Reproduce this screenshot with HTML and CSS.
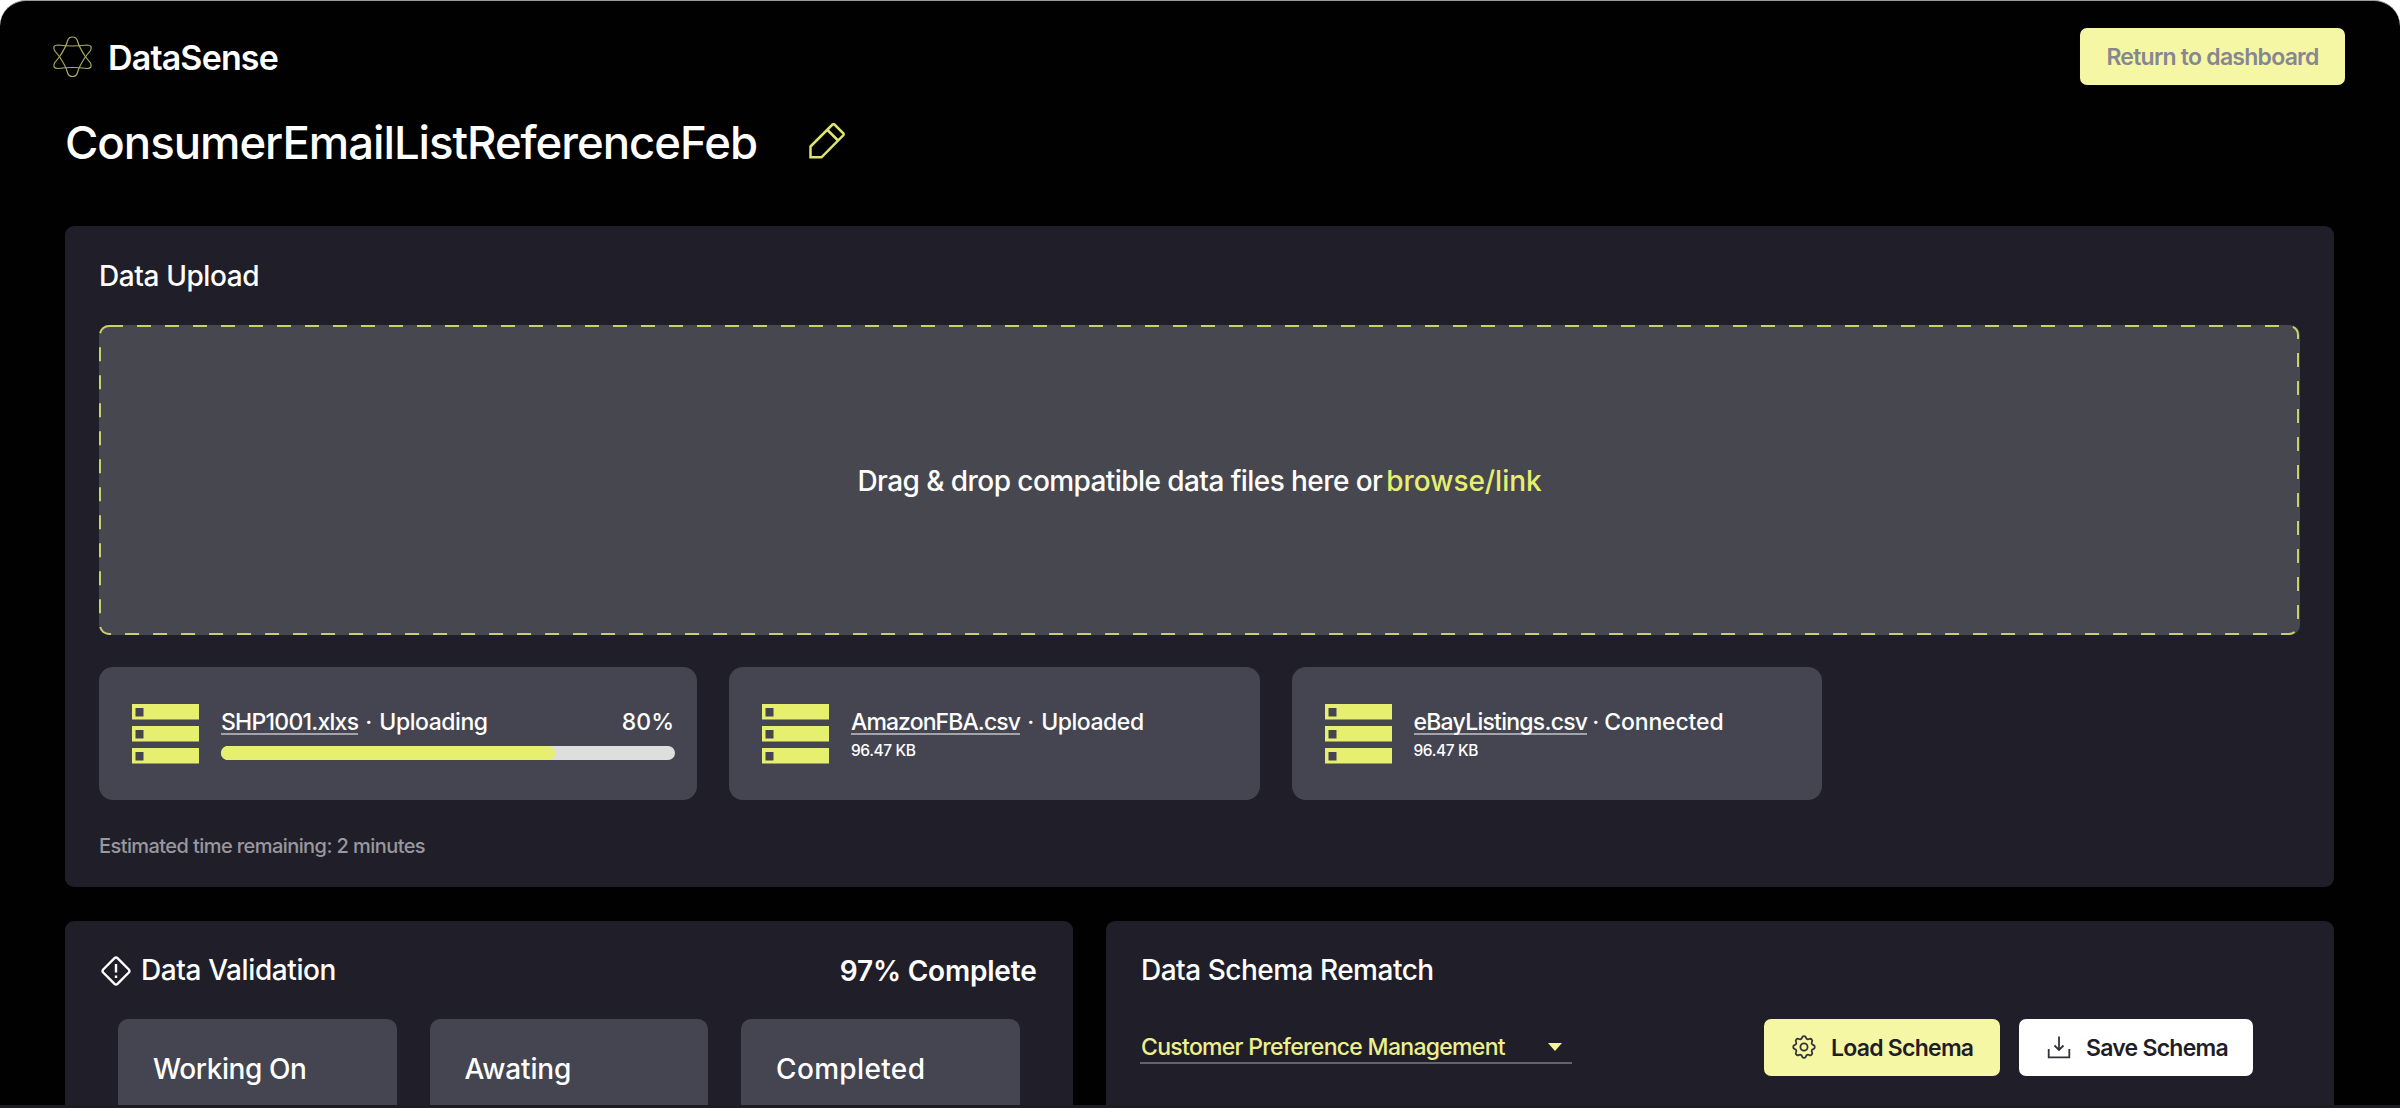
FILE: index.html
```html
<!DOCTYPE html>
<html lang="en">
<head>
    <meta charset="UTF-8">
    <meta name="viewport" content="width=device-width, initial-scale=1.0">
    <title>DataSense</title>
    <link rel="stylesheet" href="styles.css">
</head>
<body>
    <div class="app">
        <header class="topbar">
            <div class="brand">
                <svg class="logo" viewBox="0 0 43 42">
                    <path d="M16.500 5 Q17.500 1 21.500 1 Q25.500 1 26.500 5 Q28 11 34.500 20.750 L39.500 27 Q42 32.500 36 32.500 Q21.500 30.500 7 32.500 Q1 32.500 3.500 27 L8.500 20.750 Q15 11 16.500 5 Z"/>
                    <path d="M16.500 36.500 Q17.500 40.500 21.500 40.500 Q25.500 40.500 26.500 36.500 Q28 30.500 34.500 20.750 L39.500 14.500 Q42 9 36 9 Q21.500 11 7 9 Q1 9 3.500 14.500 L8.500 20.750 Q15 30.500 16.500 36.500 Z"/>
                </svg>
                <span class="brand-name">DataSense</span>
            </div>
            <button class="btn btn-return">Return to dashboard</button>
        </header>

        <div class="title-row">
            <h1>ConsumerEmailListReferenceFeb</h1>
            <svg class="pencil" viewBox="0 0 36 36">
                <path d="M1.500 23.500 L23.500 1.500 Q24.500 .8 25.500 1.500 L34.300 10.300 Q35 11.300 34.300 12.300 L12.500 34.300 H1.500 Z M18.500 7 L29 17.500"/>
            </svg>
        </div>

        <main>
            <section class="panel upload">
                <h2>Data Upload</h2>
                <div class="dropzone">
                    <svg class="dash">
                        <rect class="dash-line" x="1" y="1" width="2198" height="308" rx="9"/>
                    </svg>
                    <span class="drop-text">Drag &amp; drop compatible data files here or</span>
                    <a class="browse">browse/link</a>
                </div>

                <div class="files">
                    <div class="file file-wide">
                        <svg class="server" viewBox="0 0 67 60"><path d="M0 0h67v15.500H0zM3.500 4v8.500h8V4zM0 22h67v15.500H0zM3.500 26v8.500h8V26zM0 44h67v15.500H0zM3.500 48v8.500h8V48z"/></svg>
                        <div class="file-info">
                            <div class="file-line">
                                <span class="file-name name-shp">SHP1001.xlxs</span>
                                <span class="dot">·</span>
                                <span class="status">Uploading</span>
                                <span class="percent">80%</span>
                            </div>
                            <div class="progress"><div class="progress-fill"></div></div>
                        </div>
                    </div>
                    <div class="file">
                        <svg class="server" viewBox="0 0 67 60"><path d="M0 0h67v15.500H0zM3.500 4v8.500h8V4zM0 22h67v15.500H0zM3.500 26v8.500h8V26zM0 44h67v15.500H0zM3.500 48v8.500h8V48z"/></svg>
                        <div class="file-info">
                            <div class="file-line">
                                <span class="file-name">AmazonFBA.csv</span>
                                <span class="dot">·</span>
                                <span class="status">Uploaded</span>
                            </div>
                            <div class="file-size">96.47 KB</div>
                        </div>
                    </div>
                    <div class="file">
                        <svg class="server" viewBox="0 0 67 60"><path d="M0 0h67v15.500H0zM3.500 4v8.500h8V4zM0 22h67v15.500H0zM3.500 26v8.500h8V26zM0 44h67v15.500H0zM3.500 48v8.500h8V48z"/></svg>
                        <div class="file-info">
                            <div class="file-line tight">
                                <span class="file-name name-ebay">eBayListings.csv</span>
                                <span class="dot">·</span>
                                <span class="status connected">Connected</span>
                            </div>
                            <div class="file-size">96.47 KB</div>
                        </div>
                    </div>
                </div>
                <p class="estimate">Estimated time remaining: 2 minutes</p>
            </section>

            <div class="columns">
                <section class="panel validation">
                    <div class="panel-head">
                        <svg class="warning" viewBox="0 0 30 30">
                            <path d="M13.500 2.200 Q15 .9 16.500 2.200 L27.800 13.500 Q29.100 15 27.800 16.500 L16.500 27.800 Q15 29.100 13.500 27.800 L2.200 16.500 Q.9 15 2.200 13.500 Z M15 8 V16.500 M15 19.500 V22"/>
                        </svg>
                        <h2>Data Validation</h2>
                        <span class="complete">97% Complete</span>
                    </div>
                    <div class="stages">
                        <div class="stage">Working On</div>
                        <div class="stage awaiting">Awating</div>
                        <div class="stage completed">Completed</div>
                    </div>
                </section>

                <section class="panel schema">
                    <h2 class="schema-title">Data Schema Rematch</h2>
                    <div class="schema-row">
                        <div class="select">
                            <span>Customer Preference Management</span>
                            <svg class="caret" viewBox="0 0 14 8"><path d="M0 0h14L7 8z"/></svg>
                        </div>
                        <button class="btn btn-load">
                            <svg class="btn-icon gear" viewBox="2 2 20 20">
                                <path d="M10.325 4.317c.426-1.756 2.924-1.756 3.350 0a1.724 1.724 0 0 0 2.573 1.066c1.543-.94 3.310.826 2.370 2.370a1.724 1.724 0 0 0 1.065 2.572c1.756.426 1.756 2.924 0 3.350a1.724 1.724 0 0 0-1.066 2.573c.94 1.543-.826 3.310-2.370 2.370a1.724 1.724 0 0 0-2.572 1.065c-.426 1.756-2.924 1.756-3.350 0a1.724 1.724 0 0 0-2.573-1.066c-1.543.94-3.310-.826-2.370-2.370a1.724 1.724 0 0 0-1.065-2.572c-1.756-.426-1.756-2.924 0-3.350a1.724 1.724 0 0 0 1.066-2.573c-.94-1.543.826-3.310 2.370-2.370.996.608 2.296.070 2.572-1.065z"/>
                                <circle cx="12" cy="12" r="3"/>
                            </svg>
                            Load Schema
                        </button>
                        <button class="btn btn-save">
                            <svg class="btn-icon" viewBox="0 0 24 24">
                                <path d="M12 1.500V15M7.500 10.500L12 15l4.500-4.500M1.700 14v8.300h20.600V14"/>
                            </svg>
                            Save Schema
                        </button>
                    </div>
                </section>
            </div>
        </main>
    </div>
</body>
</html>
```
FILE: styles.css
```css
* {
    box-sizing: border-box;
}
body {
    margin: 0;
    background-color: #fff;
    color: #fff;
    font-family: Inter, "Open Sans", sans-serif;
    font-weight: 500;
}
.app {
    height: 1108px;
    overflow: hidden;
    background-color: #010101;
    border-top: 1px solid #9a9c9c;
    border-bottom: 3px solid #1d1c21;
    border-radius: 26px 26px 0 0;
}
h1, h2, p {
    margin: 0;
    font-weight: 500;
}
h2 {
    font-size: 28px;
    line-height: 35px;
    letter-spacing: -0.4px;
}
.topbar {
    display: flex;
    justify-content: space-between;
    align-items: center;
    height: 57px;
    margin: 27px 55px 0 51px;
}
.brand {
    display: flex;
    align-items: center;
}
.logo {
    width: 43px;
    height: 42px;
    fill: none;
    stroke: #a9ab62;
    stroke-width: 1.2;
}
.brand-name {
    margin: 2px 0 0 14px;
    font-size: 34px;
    font-weight: 600;
    line-height: 42px;
    letter-spacing: -0.85px;
}
.btn {
    display: flex;
    align-items: center;
    height: 57px;
    border: none;
    border-radius: 7px;
    font-family: inherit;
    font-size: 23px;
    font-weight: 600;
    letter-spacing: -0.75px;
    white-space: nowrap;
    color: #1f1e28;
    background-color: #f6f7a5;
}
.btn-return {
    justify-content: center;
    width: 265px;
    padding: 1px 0 0;
    color: #878790;
}
.title-row {
    display: flex;
    align-items: center;
    height: 54px;
    margin: 31px 0 0 65px;
}
.title-row h1 {
    font-size: 45.5px;
    line-height: 54px;
    letter-spacing: -1.02px;
}
.pencil {
    width: 36px;
    height: 36px;
    margin: 0 0 4px 52px;
    fill: none;
    stroke: #e0e66c;
    stroke-width: 2.5;
}
main {
    margin: 56px 66px 0 65px;
}
.panel {
    background-color: #201f29;
    border-radius: 9px;
}
.upload {
    height: 661px;
    padding: 33px 34px 0;
}
.dropzone {
    position: relative;
    display: flex;
    justify-content: center;
    align-items: center;
    gap: 4px;
    height: 310px;
    margin-top: 31px;
    padding-top: 2px;
    border-radius: 10px;
    background-color: #47474f;
    font-size: 28px;
}
/* dashed outline of the drop area */
.dash {
    position: absolute;
    inset: 0;
    width: 100%;
    height: 100%;
}
.dash-line {
    fill: none;
    stroke: #c9cf6a;
    stroke-width: 2;
    stroke-dasharray: 14 14;
}
.drop-text {
    letter-spacing: -0.57px;
}
.browse {
    color: #e7f06e;
    letter-spacing: -0.05px;
}
.files {
    display: flex;
    gap: 32px;
    margin-top: 32px;
}
.file {
    display: flex;
    width: 530.5px;
    height: 133px;
    padding: 37px 22px 0 33px;
    border-radius: 14px;
    background-color: #444550;
}
.file-wide {
    width: 598px;
}
.server {
    flex: none;
    width: 67px;
    height: 60px;
    fill: #e7f06e;
    fill-rule: evenodd;
}
.file-info {
    flex: 1;
    margin-left: 22px;
}
.file-line {
    display: flex;
    height: 31px;
    padding-top: 4px;
    font-size: 23px;
    line-height: 28px;
}
.file-name {
    height: 27px;
    border-bottom: 2px solid #a3a3aa;
    letter-spacing: -0.9px;
}
.name-shp, .name-ebay {
    letter-spacing: -0.75px;
}
.dot {
    width: 21px;
    text-align: center;
}
.tight .dot {
    width: 17px;
}
.status {
    letter-spacing: -0.45px;
}
.connected {
    letter-spacing: -0.15px;
}
.percent {
    margin-left: auto;
    margin-right: 1px;
}
.progress {
    height: 14px;
    margin-top: 11px;
    border-radius: 7px;
    background-color: #dededf;
}
.progress-fill {
    width: 73.5%;
    height: 14px;
    border-radius: 7px;
    background-color: #e7f06e;
}
.file-size {
    margin-top: 6px;
    font-size: 15.5px;
    line-height: 20px;
    letter-spacing: -0.4px;
}
.estimate {
    margin-top: 34px;
    font-size: 20px;
    line-height: 24px;
    letter-spacing: -0.58px;
    color: #98989e;
}
.columns {
    display: grid;
    grid-template-columns: 1007.5px 1228px;
    gap: 33.5px;
    margin-top: 34px;
}
.columns .panel {
    height: 240px;
}
.panel-head {
    display: flex;
    align-items: center;
    padding: 32px 36px 0 36px;
}
.panel-head h2 {
    margin-left: 10px;
}
.warning {
    width: 30px;
    height: 30px;
    fill: none;
    stroke: #fff;
    stroke-width: 2.4;
}
.complete {
    margin-left: auto;
    font-size: 28px;
    font-weight: 600;
    letter-spacing: -0.2px;
}
.stages {
    display: flex;
    gap: 33px;
    margin: 31px 0 0 53px;
}
.stage {
    width: 278.5px;
    height: 140px;
    padding: 33px 0 0 35px;
    border-radius: 10px;
    background-color: #444550;
    font-size: 28px;
    line-height: 35px;
    letter-spacing: -0.4px;
}
.awaiting {
    letter-spacing: -0.15px;
}
.completed {
    letter-spacing: 0.35px;
}
.schema {
    padding: 32px 81px 0 34px;
}
.schema-title {
    margin-left: 1px;
    letter-spacing: -0.5px;
}
.schema-row {
    display: flex;
    margin-top: 31px;
}
.select {
    display: flex;
    align-items: center;
    width: 431.5px;
    height: 45px;
    margin-right: auto;
    padding: 13px 10px 0 1px;
    border-bottom: 2px solid #63636b;
    font-size: 23px;
    letter-spacing: -0.7px;
    line-height: 28px;
    color: #eef08e;
}
.caret {
    width: 14px;
    height: 8px;
    margin: 0 0 1px auto;
    fill: #f3f596;
}
.btn-load {
    width: 236px;
    padding: 0 0 0 28px;
}
.btn-save {
    width: 234px;
    margin-left: 19px;
    padding: 0 0 0 28px;
    background-color: #fff;
}
.btn-icon {
    width: 24px;
    height: 24px;
    margin: 0 15px 2px 0;
    fill: none;
    stroke: #33323a;
    stroke-width: 1.8;
}
.gear {
    stroke-width: 1.5;
}
```
